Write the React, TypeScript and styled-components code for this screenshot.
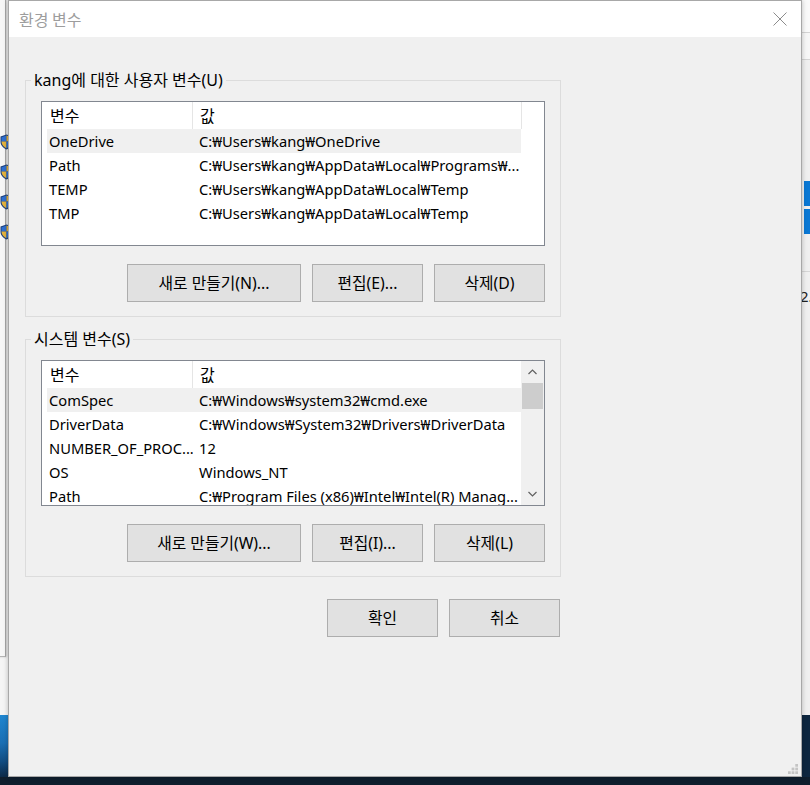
import React from "react";
import styled, { createGlobalStyle } from "styled-components";

const GlobalStyle = createGlobalStyle`
  html, body { margin: 0; padding: 0; }
  body {
    background: #f3f3f3;
    font-family: "Noto Sans", "Noto Sans CJK KR", sans-serif;
    color: #000;
  }
  * { box-sizing: border-box; }
`;

const Desktop = styled.div`
  position: relative;
  width: 810px;
  height: 785px;
  overflow: hidden;
  background: #f5f5f5;
`;

/* ---------- windows behind the dialog ---------- */
const BackWindowLeft = styled.div`
  position: absolute;
  left: -20px;
  top: -1px;
  width: 26px;
  height: 658px;
  background: #f7f7f7;
  border-right: 1px solid #a6a6a6;
  border-bottom: 1px solid #b4b4b4;
  box-shadow: 1px 0 2px rgba(0, 0, 0, 0.18);
`;

const ShieldMark = styled.svg`
  position: absolute;
  left: 0;
  width: 13px;
  height: 16px;
`;

const Wallpaper = styled.div`
  position: absolute;
  left: 0;
  top: 715px;
  width: 12px;
  height: 62px;
  background: linear-gradient(180deg, #1f86d0 0%, #1a6fb4 45%, #124d82 75%, #0d2a48 100%);
`;

const RightWindow = styled.div`
  position: absolute;
  left: 800px;
  top: 0;
  width: 20px;
  height: 715px;
  background: #f0f0f0;
  display: flex;
  flex-direction: column;
`;

const RightTop = styled.div`
  height: 33px;
  background: #fafafa;
  border-bottom: 1px solid #d4d4d4;
`;

const RightBand = styled.div`
  height: 27px;
  background: #f7f7f7;
  border-bottom: 1px solid #d4d4d4;
`;

const RightTile = styled.div<{ $top: number }>`
  margin-top: ${(p) => p.$top}px;
  margin-left: 4px;
  height: 25px;
  background: #0a78d4;
`;

const RightRule = styled.div`
  margin-top: 37px;
  height: 1px;
  background: #d6d6d6;
`;

const RightText = styled.div`
  margin-top: 14px;
  font-size: 15px;
  line-height: 20px;
  color: #222;
  white-space: nowrap;
`;

const DarkCorner = styled.div`
  position: absolute;
  left: 800px;
  top: 715px;
  width: 10px;
  height: 62px;
  background: #0e2740;
`;

const Taskbar = styled.div`
  position: absolute;
  left: 0;
  top: 777px;
  width: 810px;
  height: 8px;
  background: #0f1e2d;
`;

/* ---------- dialog ---------- */
const Dialog = styled.div`
  position: absolute;
  left: 8px;
  top: 0;
  width: 794px;
  height: 777px;
  background: #f0f0f0;
  border: 1px solid #a8a8a8;
  box-shadow: 0 0 5px rgba(0, 0, 0, 0.25);
  display: flex;
  flex-direction: column;
`;

const TitleBar = styled.div`
  height: 36px;
  flex: none;
  background: #ffffff;
  display: flex;
  align-items: center;
  justify-content: space-between;
  padding: 0 14px 0 10px;
`;

const Title = styled.div`
  font-family: "Noto Sans CJK KR", sans-serif;
  font-size: 16px;
  color: #9d9d9d;
  line-height: 20px;
`;

const CloseButton = styled.div`
  width: 14px;
  height: 14px;
  display: flex;
  align-items: center;
  justify-content: center;
`;

const Body = styled.div`
  flex: 1;
  padding: 33px 0 0 16px;
  display: flex;
  flex-direction: column;
  position: relative;
`;

const GroupBox = styled.fieldset<{ $gap?: number }>`
  margin: ${(p) => p.$gap ?? 0}px 0 0 0;
  width: 536px;
  min-width: 0;
  padding: 11px 15px 14px 15px;
  border: 1px solid #dcdcdc;
  display: flex;
  flex-direction: column;
`;

const GroupLegend = styled.legend`
  margin-left: -10px;
  padding: 0 3px;
  font-size: 16px;
  line-height: 20px;
  height: 20px;
  white-space: nowrap;
`;

const ListView = styled.div<{ $height: number }>`
  height: ${(p) => p.$height}px;
  background: #ffffff;
  border: 1px solid #828790;
  display: flex;
  overflow: hidden;
`;

const ListMain = styled.div`
  flex: 1;
  min-width: 0;
  display: flex;
  flex-direction: column;
  overflow: hidden;
`;

const ListHeader = styled.div`
  height: 27px;
  flex: none;
  display: flex;
`;

const HeaderCell = styled.div<{ $width: number; $pad: number }>`
  width: ${(p) => p.$width}px;
  flex: none;
  border-right: 1px solid #e5e5e5;
  padding: 2px 0 0 ${(p) => p.$pad}px;
  font-size: 16px;
  line-height: 24px;
  white-space: nowrap;
`;

const Row = styled.div<{ $selected?: boolean }>`
  height: 24px;
  flex: none;
  width: 474px;
  margin-left: 5px;
  display: flex;
  align-items: center;
  background: ${(p) => (p.$selected ? "#f0f0f0" : "transparent")};
  font-size: 14.7px;
  line-height: 20px;
  white-space: nowrap;
`;

const NameCell = styled.div`
  width: 146px;
  flex: none;
  padding-left: 2px;
  overflow: hidden;
`;

const ValueCell = styled.div`
  flex: 1;
  min-width: 0;
  padding-left: 6px;
  overflow: hidden;
`;

const Scrollbar = styled.div`
  width: 23px;
  flex: none;
  background: #f0f0f0;
  display: flex;
  flex-direction: column;
  align-items: center;
`;

const ScrollArrow = styled.div`
  height: 22px;
  width: 100%;
  flex: none;
  display: flex;
  align-items: center;
  justify-content: center;
`;

const ScrollThumb = styled.div`
  width: 21px;
  height: 26px;
  background: #cdcdcd;
`;

const ScrollTrack = styled.div`
  flex: 1;
`;

const ButtonRow = styled.div<{ $top: number }>`
  margin-top: ${(p) => p.$top}px;
  display: flex;
  justify-content: flex-end;
  gap: 11px;
`;

const Button = styled.button<{ $wide?: boolean }>`
  width: ${(p) => (p.$wide ? 174 : 111)}px;
  height: 38px;
  margin: 0;
  padding: 0;
  background: #e1e1e1;
  border: 1px solid #adadad;
  border-radius: 0;
  font-family: "Noto Sans", "Noto Sans CJK KR", sans-serif;
  font-size: 15.8px;
  line-height: 20px;
  color: #000;
  white-space: nowrap;
`;

const Footer = styled.div`
  width: 535px;
  margin-top: 22px;
  display: flex;
  justify-content: flex-end;
  gap: 11px;
`;

const ResizeGrip = styled.svg`
  position: absolute;
  right: 3px;
  bottom: 2px;
  width: 10px;
  height: 10px;
`;

type Variable = { name: string; value: string; selected?: boolean };

const userVars: Variable[] = [
  { name: "OneDrive", value: "C:₩Users₩kang₩OneDrive", selected: true },
  { name: "Path", value: "C:₩Users₩kang₩AppData₩Local₩Programs₩..." },
  { name: "TEMP", value: "C:₩Users₩kang₩AppData₩Local₩Temp" },
  { name: "TMP", value: "C:₩Users₩kang₩AppData₩Local₩Temp" },
];

const systemVars: Variable[] = [
  { name: "ComSpec", value: "C:₩Windows₩system32₩cmd.exe", selected: true },
  { name: "DriverData", value: "C:₩Windows₩System32₩Drivers₩DriverData" },
  { name: "NUMBER_OF_PROC...", value: "12" },
  { name: "OS", value: "Windows_NT" },
  { name: "Path", value: "C:₩Program Files (x86)₩Intel₩Intel(R) Manag..." },
];

const Shield: React.FC<{ top: number }> = ({ top }) => (
  <ShieldMark style={{ top }} viewBox="0 0 13 16">
    <path d="M6.5 0.5 L12.5 2.5 L12.5 8 C12.5 11.5 9.5 14 6.5 15.5 C3.5 14 0.5 11.5 0.5 8 L0.5 2.5 Z" fill="#1d3f7a" />
    <path d="M6.5 1.5 L1.5 3.2 L1.5 7.6 L6.5 7.6 Z" fill="#2f6fd0" />
    <path d="M1.5 7.6 L6.5 7.6 L6.5 14.3 C4 13 1.6 11 1.5 8 Z" fill="#e3b23c" />
    <path d="M6.5 1.5 L11.5 3.2 L11.5 7.6 L6.5 7.6 Z" fill="#e3b23c" />
    <path d="M11.5 7.6 L6.5 7.6 L6.5 14.3 C9 13 11.4 11 11.5 8 Z" fill="#2f6fd0" />
  </ShieldMark>
);

const Chevron: React.FC<{ up?: boolean }> = ({ up }) => (
  <svg width="9" height="6" viewBox="0 0 9 6">
    <path
      d={up ? "M0.5 5 L4.5 1 L8.5 5" : "M0.5 1 L4.5 5 L8.5 1"}
      fill="none"
      stroke="#606060"
      strokeWidth="1.2"
    />
  </svg>
);

const VarList: React.FC<{ rows: Variable[]; height: number; scroll?: boolean }> = ({
  rows,
  height,
  scroll,
}) => (
  <ListView $height={height}>
    <ListMain>
      <ListHeader>
        <HeaderCell $width={151} $pad={8}>변수</HeaderCell>
        <HeaderCell $width={329} $pad={7}>값</HeaderCell>
      </ListHeader>
      {rows.map((r) => (
        <Row key={r.name + r.value} $selected={r.selected}>
          <NameCell>{r.name}</NameCell>
          <ValueCell>{r.value}</ValueCell>
        </Row>
      ))}
    </ListMain>
    {scroll && (
      <Scrollbar>
        <ScrollArrow>
          <Chevron up />
        </ScrollArrow>
        <ScrollThumb />
        <ScrollTrack />
        <ScrollArrow>
          <Chevron />
        </ScrollArrow>
      </Scrollbar>
    )}
  </ListView>
);

export default function App() {
  return (
    <Desktop>
      <GlobalStyle />
      <BackWindowLeft />
      <Shield top={134} />
      <Shield top={164} />
      <Shield top={194} />
      <Shield top={224} />
      <Wallpaper />
      <RightWindow>
        <RightTop />
        <RightBand />
        <RightTile $top={121} />
        <RightTile $top={3} />
        <RightRule />
        <RightText>2.</RightText>
      </RightWindow>
      <DarkCorner />
      <Taskbar />

      <Dialog>
        <TitleBar>
          <Title>환경 변수</Title>
          <CloseButton>
            <svg width="14" height="14" viewBox="0 0 14 14">
              <path d="M0.5 0.5 L13.5 13.5 M13.5 0.5 L0.5 13.5" stroke="#8c8c8c" strokeWidth="1" />
            </svg>
          </CloseButton>
        </TitleBar>
        <Body>
          <GroupBox>
            <GroupLegend>kang에 대한 사용자 변수(U)</GroupLegend>
            <VarList rows={userVars} height={145} />
            <ButtonRow $top={18}>
              <Button $wide>새로 만들기(N)...</Button>
              <Button>편집(E)...</Button>
              <Button>삭제(D)</Button>
            </ButtonRow>
          </GroupBox>

          <GroupBox $gap={12}>
            <GroupLegend>시스템 변수(S)</GroupLegend>
            <VarList rows={systemVars} height={146} scroll />
            <ButtonRow $top={18}>
              <Button $wide>새로 만들기(W)...</Button>
              <Button>편집(I)...</Button>
              <Button>삭제(L)</Button>
            </ButtonRow>
          </GroupBox>

          <Footer>
            <Button>확인</Button>
            <Button>취소</Button>
          </Footer>

          <ResizeGrip viewBox="0 0 11 11">
            <rect x="8" y="0" width="3" height="3" fill="#c4c4c4" />
            <rect x="4" y="4" width="3" height="3" fill="#c4c4c4" />
            <rect x="8" y="4" width="3" height="3" fill="#c4c4c4" />
            <rect x="0" y="8" width="3" height="3" fill="#c4c4c4" />
            <rect x="4" y="8" width="3" height="3" fill="#c4c4c4" />
            <rect x="8" y="8" width="3" height="3" fill="#c4c4c4" />
          </ResizeGrip>
        </Body>
      </Dialog>
    </Desktop>
  );
}
